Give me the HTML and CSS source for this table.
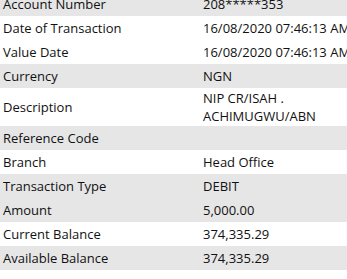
FILE: index.html
```html
<!DOCTYPE html>
<html>
<head>
<meta charset="utf-8">
<link rel="stylesheet" href="styles.css">
</head>
<body>
<div class="wrap">
<table class="details">
<tr class="grey"><td class="label">Account Number</td><td class="value">208*****353</td></tr>
<tr><td class="label">Date of Transaction</td><td class="value">16/08/2020 07:46:13 AM</td></tr>
<tr><td class="label">Value Date</td><td class="value">16/08/2020 07:46:13 AM</td></tr>
<tr class="grey"><td class="label">Currency</td><td class="value">NGN</td></tr>
<tr class="tall"><td class="label">Description</td><td class="value">NIP CR/ISAH .<br>ACHIMUGWU/ABN</td></tr>
<tr class="grey"><td class="label">Reference Code</td><td class="value"></td></tr>
<tr><td class="label">Branch</td><td class="value">Head Office</td></tr>
<tr class="grey"><td class="label">Transaction Type</td><td class="value">DEBIT</td></tr>
<tr class="grey"><td class="label">Amount</td><td class="value">5,000.00</td></tr>
<tr><td class="label">Current Balance</td><td class="value">374,335.29</td></tr>
<tr class="grey"><td class="label">Available Balance</td><td class="value">374,335.29</td></tr>
</table>
</div>
</body>
</html>
```
FILE: styles.css
```css
html, body {
  margin: 0;
  padding: 0;
  overflow: hidden;
  background: #fff;
}
.wrap {
  margin-top: -8px;
  width: 420px;
}
.details {
  border-collapse: collapse;
  width: 420px;
  font-family: "Open Sans", sans-serif;
  font-size: 13px;
  color: #111;
}
.details td {
  height: 24px;
  padding: 0 3px;
  line-height: 18px;
  vertical-align: middle;
  white-space: nowrap;
  box-sizing: border-box;
}
.details .label {
  width: 200px;
}
.details .tall td {
  height: 38px;
}
.details .grey td {
  background: #e6e6e6;
}
```
